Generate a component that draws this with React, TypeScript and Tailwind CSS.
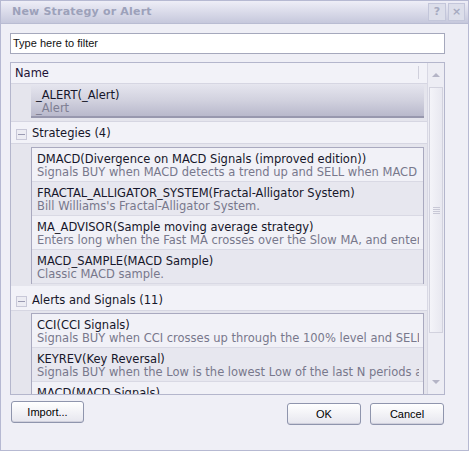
import React from "react";

type Item = { name: string; desc: string };

const strategies: Item[] = [
  {
    name: "DMACD(Divergence on MACD Signals (improved edition))",
    desc: "Signals BUY when MACD detects a trend up and SELL when MACD detects a trend down",
  },
  { name: "FRACTAL_ALLIGATOR_SYSTEM(Fractal-Alligator System)", desc: "Bill Williams's Fractal-Alligator System." },
  {
    name: "MA_ADVISOR(Sample moving average strategy)",
    desc: "Enters long when the Fast MA crosses over the Slow MA, and enters short when it crosses under",
  },
  { name: "MACD_SAMPLE(MACD Sample)", desc: "Classic MACD sample." },
];

const alerts: Item[] = [
  {
    name: "CCI(CCI Signals)",
    desc: "Signals BUY when CCI crosses up through the 100% level and SELL when it crosses down",
  },
  {
    name: "KEYREV(Key Reversal)",
    desc: "Signals BUY when the Low is the lowest Low of the last N periods and the Close is higher",
  },
  { name: "MACD(MACD Signals)", desc: "" },
];

function Row({ item, odd }: { item: Item; odd: boolean }) {
  return (
    <div
      className={`h-[34px] pl-[5px] pr-[4px] pt-[5px] overflow-hidden whitespace-nowrap border-b border-[#d9d9e4] ${
        odd ? "bg-[#e7e7ef]" : "bg-[#f1f1f7]"
      }`}
    >
      <div className="leading-[13px] text-[#16162a] overflow-hidden">{item.name}</div>
      {item.desc && <div className="leading-[13px] text-[#78788c] overflow-hidden">{item.desc}</div>}
    </div>
  );
}

function GroupHeader({ title, box }: { title: string; box: string }) {
  return (
    <div className={`${box} flex items-center pl-[5px] border-b border-[#d6d6e2] bg-[#f2f2f8]`}>
      <div className="w-[11px] h-[11px] border border-[#c8c8d8] bg-[#ececf3] flex items-center justify-center">
        <div className="w-[7px] h-px bg-[#9a9ab2]" />
      </div>
      <span className="ml-[5px] text-[#16162a]">{title}</span>
    </div>
  );
}

function Group({ items, pt, pb, height }: { items: Item[]; pt: string; pb: string; height?: string }) {
  return (
    <div className={`flex ${height ?? ""}`}>
      <div className="w-[20px] shrink-0 bg-[#e5e5ed]" />
      <div className={`flex-1 min-w-0 ${pt} ${pb} pr-[3px] bg-[#e5e5ed] overflow-hidden`}>
        <div className="border border-[#a9a9bf] border-b-0">
          {items.map((it, i) => (
            <Row key={it.name} item={it} odd={i % 2 === 1} />
          ))}
        </div>
      </div>
    </div>
  );
}

function Button({ label, className }: { label: string; className: string }) {
  return (
    <button
      className={`h-[22px] rounded-[3px] border border-[#8f95ad] bg-gradient-to-b from-[#ffffff] to-[#e6e6ee] text-[11px] text-black shadow-[inset_0_-1px_0_#d0d0dc] ${className}`}
    >
      {label}
    </button>
  );
}

export default function App() {
  return (
    <div
      className="w-[469px] h-[451px] bg-[#efeff6] border border-[#b6b9d2] flex flex-col overflow-hidden"
      style={{ fontFamily: "'DejaVu Sans', Verdana, sans-serif" }}
    >
      {/* title bar */}
      <div className="h-[23px] shrink-0 bg-gradient-to-b from-[#eeeef7] to-[#c6c8dc] border-b border-[#b9bcd2] flex items-center pl-[11px] pr-[3px]">
        <span className="text-[11px] font-bold text-[#9ca1ba] tracking-[0.2px]">New Strategy or Alert</span>
        <div className="ml-auto flex gap-[2px]">
          <div className="w-[18px] h-[18px] border border-[#c3c6da] bg-[#dcdeea] flex items-center justify-center text-[11px] font-bold text-[#a6aac0]">
            ?
          </div>
          <div className="w-[17px] h-[18px] border border-[#c3c6da] bg-[#dcdeea] flex items-center justify-center text-[11px] font-bold text-[#a6aac0]">
            ×
          </div>
        </div>
      </div>

      {/* filter */}
      <div className="px-[9px] pt-[9px]">
        <div
          className="h-[21px] w-[435px] border border-[#a5a8bc] bg-white flex items-center pl-[2px] text-[11px] text-[#111]"
          style={{ fontFamily: "'Liberation Sans', Arial, sans-serif" }}
        >
          Type here to filter
        </div>
      </div>

      {/* list */}
      <div className="mx-[9px] mt-[8px] h-[333px] w-[435px] border border-[#b4b6cc] bg-[#f2f2f8] flex text-[11.5px] overflow-hidden">
        <div className="flex-1 min-w-0 flex flex-col overflow-hidden">
          <div className="h-[21px] shrink-0 flex items-center pl-[4px] pt-[2px] border-b border-[#d6d6e2] relative">
            <span className="text-[#1d1236]">Name</span>
            <div className="absolute right-[8px] top-[3px] w-px h-[13px] bg-[#d0d0dc]" />
          </div>

          {/* selected row */}
          <div className="flex shrink-0 border-b border-[#d6d6e2] pb-[3px] bg-[#e5e5ed]">
            <div className="w-[20px] shrink-0" />
            <div className="flex-1 mr-[3px] h-[34px] pl-[5px] pt-[5px] bg-gradient-to-b from-[#e6e6ef] via-[#d2d2df] to-[#b9b9cc] border-b-2 border-[#9898ae]">
              <div className="leading-[13px] text-[#16162a]">_ALERT(_Alert)</div>
              <div className="leading-[13px] text-[#7e7e92]">_Alert</div>
            </div>
          </div>

          <GroupHeader title="Strategies (4)" box="h-[22px] pt-[3px] shrink-0" />
          <Group items={strategies} pt="pt-[3px]" pb="pb-[2px]" />

          <GroupHeader title="Alerts and Signals (11)" box="h-[25px] pt-[6px] shrink-0" />
          <Group items={alerts} pt="pt-[2px]" pb="pb-0" height="flex-1 min-h-0" />
        </div>

        {/* scrollbar */}
        <div className="w-[17px] shrink-0 border-l border-[#d8d8e4] bg-[#ededf4] flex flex-col items-center">
          <div className="h-[24px] flex items-center justify-center">
            <div className="w-0 h-0 border-l-[4px] border-r-[4px] border-b-[4px] border-l-transparent border-r-transparent border-b-[#b4b4c6]" />
          </div>
          <div className="w-[14px] h-[246px] border border-[#d2d2de] bg-gradient-to-r from-[#f4f4f9] to-[#e8e8f0] flex flex-col items-center justify-center gap-[1px]">
            <div className="w-[7px] h-px bg-[#c8c8d6]" />
            <div className="w-[7px] h-px bg-[#c8c8d6]" />
            <div className="w-[7px] h-px bg-[#c8c8d6]" />
            <div className="w-[7px] h-px bg-[#c8c8d6]" />
          </div>
          <div className="flex-1" />
          <div className="h-[24px] flex items-center justify-center">
            <div className="w-0 h-0 border-l-[4px] border-r-[4px] border-t-[4px] border-l-transparent border-r-transparent border-t-[#b4b4c6]" />
          </div>
        </div>
      </div>

      {/* buttons */}
      <div className="flex items-start pl-[10px] pr-[24px] mt-[6px]" style={{ fontFamily: "'Liberation Sans', Arial, sans-serif" }}>
        <Button label="Import..." className="w-[73px]" />
        <div className="flex-1" />
        <Button label="OK" className="w-[74px] mt-[2px]" />
        <Button label="Cancel" className="w-[74px] mt-[2px] ml-[9px]" />
      </div>
      <div className="flex-1" />
    </div>
  );
}
